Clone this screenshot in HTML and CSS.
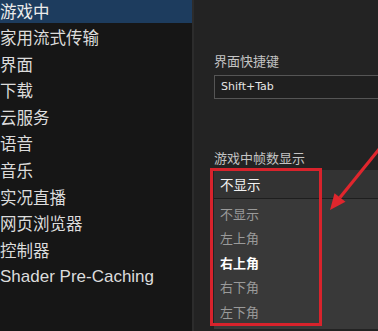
FILE: index.html
```html
<!DOCTYPE html>
<html lang="zh-CN">
<head>
    <meta charset="UTF-8">
    <title>设置 - 游戏中</title>
    <link rel="stylesheet" href="styles.css">
</head>
<body>
    <div class="window">
        <nav class="sidebar">
            <div class="nav-item active">游戏中</div>
            <div class="nav-item">家用流式传输</div>
            <div class="nav-item">界面</div>
            <div class="nav-item">下载</div>
            <div class="nav-item">云服务</div>
            <div class="nav-item">语音</div>
            <div class="nav-item">音乐</div>
            <div class="nav-item">实况直播</div>
            <div class="nav-item">网页浏览器</div>
            <div class="nav-item">控制器</div>
            <div class="nav-item latin">Shader Pre-Caching</div>
        </nav>
        <main class="content">
            <div class="field">
                <label class="field-label">界面快捷键</label>
                <div class="text-input">Shift+Tab</div>
            </div>
            <div class="field fps">
                <label class="field-label">游戏中帧数显示</label>
                <div class="dropdown">
                    <div class="dropdown-head">不显示</div>
                    <ul class="dropdown-list">
                        <li>不显示</li>
                        <li>左上角</li>
                        <li class="selected">右上角</li>
                        <li>右下角</li>
                        <li>左下角</li>
                    </ul>
                    <div class="highlight"></div>
                </div>
            </div>
            <svg class="arrow" width="60" height="75" viewBox="0 0 60 75">
                <line x1="62" y1="6" x2="22" y2="55.5" stroke="#e0262d" stroke-width="3.2"/>
                <polygon points="12,68 27.5,59.8 16.5,51.2" fill="#e0262d"/>
            </svg>
        </main>
    </div>
</body>
</html>
```

FILE: styles.css
```css
body {
    margin: 0;
    padding: 0;
    background-color: #232323;
    font-family: 'Noto Sans CJK SC', 'Liberation Sans', sans-serif;
    overflow: hidden;
}
.window {
    display: flex;
    height: 331px;
}
.sidebar {
    width: 192px;
    flex-shrink: 0;
    background-color: #161616;
    border-right: 2px solid #2c2c2c;
}
.nav-item {
    height: 26.6px;
    line-height: 22px;
    font-size: 16.5px;
    color: #dcdcdc;
    white-space: nowrap;
}
.nav-item.active {
    background-color: #1d3c5e;
    height: 23px;
    color: #ececec;
    margin-bottom: 3px;
    line-height: 22px;
}
.nav-item.latin {
    font-family: 'Liberation Sans', sans-serif;
    font-size: 17px;
    padding-top: 1px;
}
.content {
    flex: 1;
    padding: 51px 0 0 20px;
    position: relative;
}
.field-label {
    display: block;
    font-size: 13px;
    color: #c4c4c4;
    line-height: 20px;
    margin-bottom: 4px;
}
.text-input {
    height: 22px;
    line-height: 22px;
    border: 1px solid #555;
    border-right: none;
    background-color: #1f1f1f;
    color: #e6e6e6;
    font-family: 'DejaVu Sans', sans-serif;
    font-size: 11px;
    padding-left: 6px;
}
.fps {
    margin-top: 49px;
}
.fps .field-label {
    margin-bottom: 2px;
}
.dropdown {
    position: relative;
}
.dropdown-head {
    height: 28px;
    line-height: 28px;
    background-color: #333;
    border-bottom: 1px solid #1e1e1e;
    color: #f2f2f2;
    font-size: 13.5px;
    padding-left: 6px;
}
.dropdown-list {
    list-style: none;
    margin: 0;
    padding: 3px 0 0 0;
    height: 127px;
    background-color: #393939;
}
.dropdown-list li {
    height: 24.4px;
    line-height: 24px;
    font-size: 13px;
    color: #9a9a9a;
    padding-left: 6px;
}
.dropdown-list li.selected {
    color: #fff;
    font-weight: bold;
}
.highlight {
    position: absolute;
    left: -4px;
    top: -2px;
    width: 106px;
    height: 152px;
    border: 3px solid #d8232c;
}
.arrow {
    position: absolute;
    right: 0;
    top: 142px;
}
```
